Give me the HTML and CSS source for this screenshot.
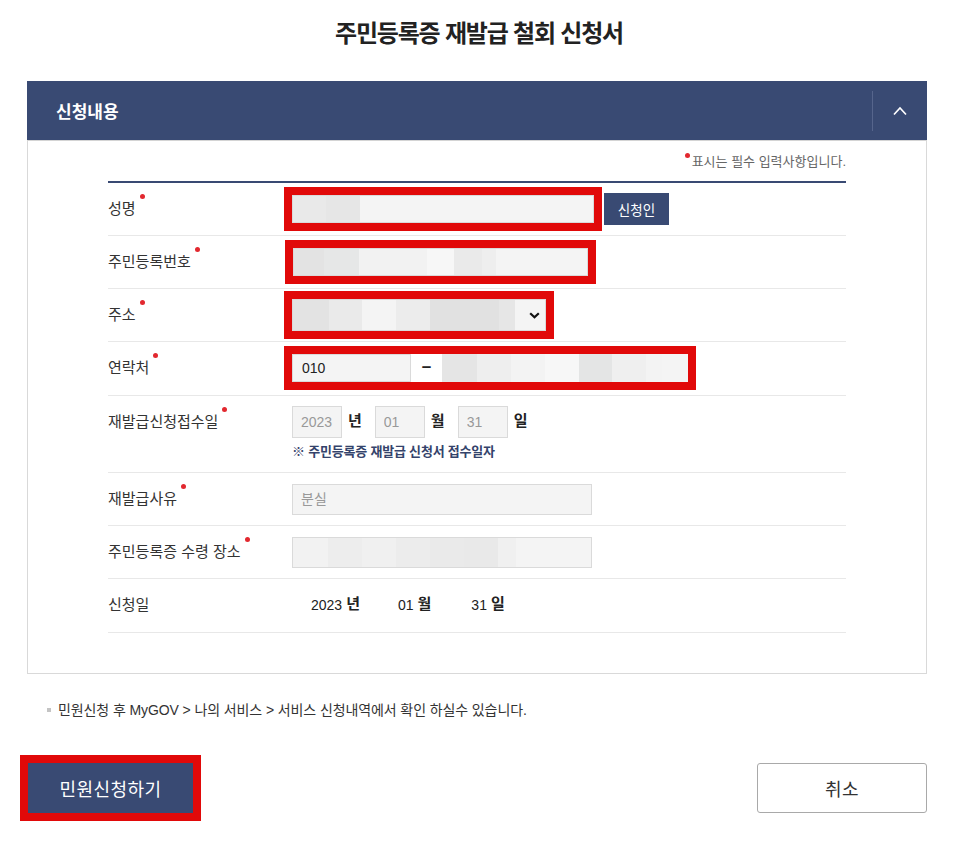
FILE: index.html
```html
<!DOCTYPE html>
<html lang="ko">
<head>
  <meta charset="UTF-8">
  <meta name="viewport" content="width=device-width, initial-scale=1.0">
  <title>주민등록증 재발급 철회 신청서</title>
  <link rel="stylesheet" href="styles.css">
</head>
<body>
  <h1 class="page-title">주민등록증 재발급 철회 신청서</h1>

  <div class="wrap">
    <div class="panel">
      <div class="panel-head">
        <h2>신청내용</h2>
        <button class="toggle" type="button" aria-label="접기">
          <svg width="14" height="10" viewBox="0 0 14 10"><polyline points="1,8.5 7,2 13,8.5" fill="none" stroke="#fff" stroke-width="1.7"/></svg>
        </button>
      </div>

      <div class="panel-body">
        <p class="req-note"><span class="dot"></span>표시는 필수 입력사항입니다.</p>

        <div class="form">
          <div class="row">
            <div class="label"><span class="req">성명</span></div>
            <div class="field">
              <input type="text" class="inp masked blur-name" readonly>
              <button class="btn-small" type="button">신청인</button>
            </div>
          </div>

          <div class="row">
            <div class="label"><span class="req">주민등록번호</span></div>
            <div class="field">
              <input type="text" class="inp masked blur-rrn" readonly>
            </div>
          </div>

          <div class="row">
            <div class="label"><span class="req">주소</span></div>
            <div class="field">
              <span class="select-wrap masked">
                <select class="sel blur-addr"><option></option></select>
                <svg class="caret" width="11" height="7" viewBox="0 0 11 7"><polyline points="1.2,1.2 5.5,5.3 9.8,1.2" fill="none" stroke="#111" stroke-width="2.2"/></svg>
              </span>
            </div>
          </div>

          <div class="row row-plus">
            <div class="label"><span class="req">연락처</span></div>
            <div class="field">
              <span class="phone masked">
                <input type="text" class="inp phone-first" value="010" readonly>
                <span class="dash">–</span>
                <input type="text" class="inp phone-rest blur-phone" readonly>
              </span>
            </div>
          </div>

          <div class="row row-tall">
            <div class="label"><span class="req">재발급신청접수일</span></div>
            <div class="field-col">
              <div class="date">
                <input type="text" class="inp date-box" placeholder="2023" readonly>
                <span class="unit">년</span>
                <input type="text" class="inp date-box" placeholder="01" readonly>
                <span class="unit">월</span>
                <input type="text" class="inp date-box" placeholder="31" readonly>
                <span class="unit">일</span>
              </div>
              <p class="hint">※ 주민등록증 재발급 신청서 접수일자</p>
            </div>
          </div>

          <div class="row">
            <div class="label"><span class="req">재발급사유</span></div>
            <div class="field">
              <input type="text" class="inp wide" placeholder="분실" readonly>
            </div>
          </div>

          <div class="row">
            <div class="label"><span class="req">주민등록증 수령 장소</span></div>
            <div class="field">
              <input type="text" class="inp wide blur-place" readonly>
            </div>
          </div>

          <div class="row row-plus">
            <div class="label"><span>신청일</span></div>
            <div class="field">
              <div class="date-text">
                <span class="val v-year">2023</span><span class="unit">년</span>
                <span class="val v-month">01</span><span class="unit">월</span>
                <span class="val v-day">31</span><span class="unit">일</span>
              </div>
            </div>
          </div>
        </div>
      </div>
    </div>

    <p class="guide">민원신청 후 MyGOV &gt; 나의 서비스 &gt; 서비스 신청내역에서 확인 하실수 있습니다.</p>

    <div class="actions">
      <button class="btn btn-primary masked" type="button">민원신청하기</button>
      <button class="btn btn-cancel" type="button">취소</button>
    </div>
  </div>
</body>
</html>
```

FILE: styles.css
```css
body {
  font-family: "Liberation Sans", "Noto Sans CJK KR", sans-serif;
  background-color: #fff;
  color: #222;
  margin: 0;
  padding: 0 0 30px;
}
.page-title {
  margin: 0 0 33px;
  padding-top: 20px;
  font-size: 24px;
  line-height: 28px;
  font-weight: 700;
  text-align: center;
  letter-spacing: -1.2px;
  color: #222;
}
.wrap {
  width: 900px;
  margin-left: 27px;
}
.panel-head {
  display: flex;
  align-items: center;
  height: 59px;
  background-color: #394a73;
}
.panel-head h2 {
  flex: 1;
  margin: 0;
  padding-left: 29px;
  font-size: 17px;
  font-weight: 700;
  color: #fff;
  letter-spacing: 0;
}
.toggle {
  width: 55px;
  height: 40px;
  border: none;
  border-left: 1px solid #56658c;
  background: none;
  padding: 0;
  display: flex;
  align-items: center;
  justify-content: center;
}
.panel-body {
  border: 1px solid #d9d9d9;
  border-top-color: #d4d4d4;
  padding: 12px 80px 40px 80px;
}
.req-note {
  margin: 0;
  text-align: right;
  font-size: 13px;
  line-height: 18px;
  color: #666;
  letter-spacing: 0;
}
.req-note .dot {
  display: inline-block;
  width: 5px;
  height: 5px;
  border-radius: 50%;
  background: #e2282f;
  vertical-align: top;
  margin: 0 2px 0 0;
}
.form {
  margin-top: 10px;
  border-top: 2px solid #394a73;
}
.row {
  display: flex;
  align-items: flex-start;
  padding: 10px 0;
  border-bottom: 1px solid #e8e8e8;
}
.row-plus {
  padding-bottom: 11px;
}
.row-tall {
  padding-bottom: 12px;
}
.label {
  width: 184px;
  flex: none;
  line-height: 32px;
  font-size: 15px;
  letter-spacing: 0;
  color: #333;
}
.req {
  position: relative;
}
.req::after {
  content: "";
  position: absolute;
  top: -6px;
  right: -9px;
  width: 5px;
  height: 5px;
  border-radius: 50%;
  background: #e2282f;
}
.field {
  display: flex;
  align-items: center;
  min-height: 32px;
}
.inp {
  box-sizing: border-box;
  height: 32px;
  padding: 0 8px;
  border: 1px solid #dadada;
  background: #f4f4f4;
  font-family: inherit;
  font-size: 14px;
  color: #222;
  outline: none;
}
.inp::placeholder {
  color: #999;
}
.masked {
  outline: 8px solid #e10909;
}
.blur-name {
  width: 302px;
  height: 28px;
  background: linear-gradient(to right, #e9e9e9 0 33px, #e6e6e6 33px 67px, #f4f4f4 67px);
}
.blur-rrn {
  width: 295px;
  height: 28px;
  margin-left: 1px;
  background: linear-gradient(to right, #e3e3e3 0 30px, #e6e7e7 30px 65px, #f2f2f2 65px 133px, #f7f7f7 133px 160px, #eaeaea 160px 188px, #eeeeee 188px 202px, #f4f4f4 202px);
}
.btn-small {
  margin-left: 10px;
  width: 65px;
  height: 32px;
  border: none;
  background: #394a73;
  color: #fff;
  font-family: inherit;
  font-size: 13.5px;
}
.select-wrap {
  position: relative;
  display: inline-block;
}
.sel {
  display: block;
  width: 254px;
  height: 32px;
  margin: 0;
  border: 1px solid #dadada;
  appearance: none;
  -webkit-appearance: none;
  background: linear-gradient(to right, #e3e3e3 0 36px, #eaeaea 36px 69px, #f4f4f4 69px 103px, #ececec 103px 137px, #e1e1e1 137px 206px, #e6e6e6 206px 222px, #f4f4f4 222px);
}
.caret {
  position: absolute;
  right: 6px;
  top: 13px;
}
.phone {
  display: inline-flex;
  align-items: stretch;
  height: 28px;
}
.phone .inp {
  height: 28px;
}
.phone-first {
  width: 119px;
  padding-left: 9px;
  font-size: 14px;
}
.dash {
  width: 31px;
  text-align: center;
  font-weight: 700;
  font-size: 17px;
  line-height: 26px;
  background: #fff;
}
.phone-rest {
  width: 246px;
  border: none;
  background: linear-gradient(to right, #e5e5e5 0 35px, #eeeeee 35px 69px, #f3f3f3 69px 103px, #f7f7f7 103px 137px, #e4e5e5 137px 170px, #efefef 170px 204px, #f3f3f3 204px 220px, #f4f4f4 220px);
}
.date {
  display: flex;
  align-items: center;
}
.date-box {
  width: 50px;
  font-size: 14px;
}
.unit {
  margin: 0 13px 0 6px;
  font-size: 15px;
  font-weight: 700;
  color: #222;
  position: relative;
  top: -3px;
}
.hint {
  margin: 6px 0 0;
  font-size: 13px;
  line-height: 16px;
  font-weight: 700;
  color: #34436b;
  letter-spacing: -0.2px;
}
.wide {
  width: 300px;
  height: 31px;
}
.blur-place {
  background: linear-gradient(to right, #f2f2f2 0 35px, #ededed 35px 69px, #f0f0f0 69px 103px, #ececec 103px 137px, #eaeaea 137px 171px, #e9e9e9 171px 205px, #f0f0f0 205px 223px, #f4f4f4 223px);
}
.date-text {
  display: flex;
  align-items: center;
  font-size: 14px;
}
.date-text .unit {
  margin: 0 0 0 4px;
}
.v-year {
  margin-left: 19px;
}
.v-month {
  margin-left: 38px;
}
.v-day {
  margin-left: 40px;
}
.guide {
  position: relative;
  margin: 27px 0 0;
  padding-left: 31px;
  font-size: 14px;
  line-height: 18px;
  color: #333;
  letter-spacing: -0.1px;
}
.guide::before {
  content: "";
  position: absolute;
  left: 20px;
  top: 7px;
  width: 4px;
  height: 4px;
  background: #c4c4c4;
}
.actions {
  display: flex;
  justify-content: space-between;
  margin-top: 44px;
  padding-left: 1px;
}
.btn {
  height: 50px;
  font-family: inherit;
  font-size: 18px;
  letter-spacing: 0.4px;
  cursor: pointer;
}
.btn-primary {
  width: 165px;
  border: none;
  background: #394a73;
  color: #fff;
}
.btn-cancel {
  width: 170px;
  border: 1px solid #a9a9a9;
  border-radius: 3px;
  background: #fff;
  color: #333;
}
```
